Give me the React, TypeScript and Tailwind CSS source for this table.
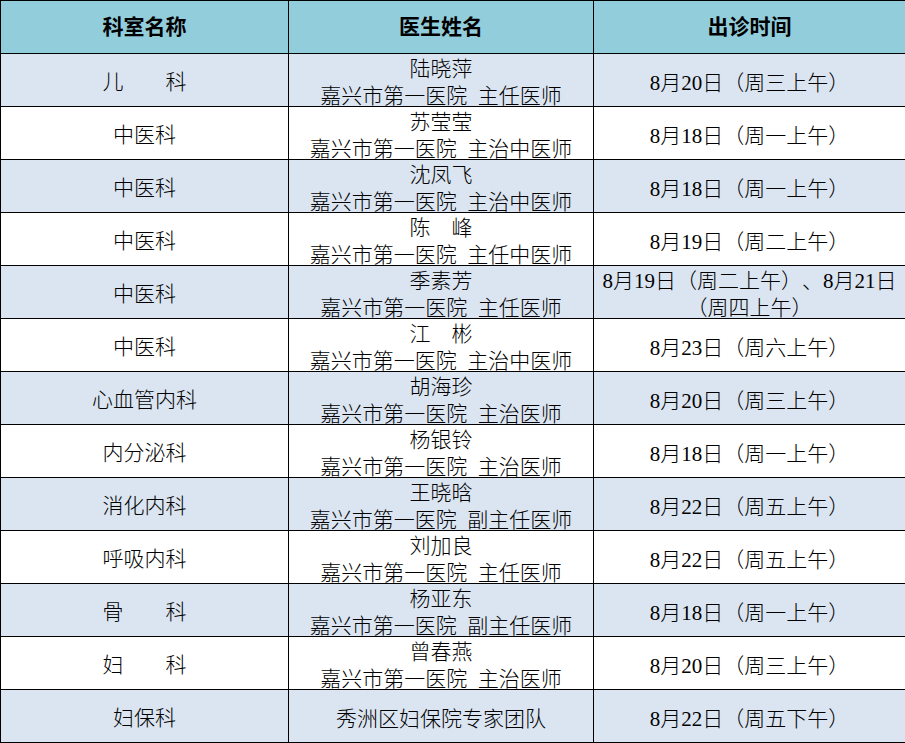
import React from 'react'

type Row = {
  dept: string
  doctor: string
  title?: string
  time: string[]
}

const rows: Row[] = [
  { dept: '儿　　科', doctor: '陆晓萍', title: '嘉兴市第一医院  主任医师', time: ['8月20日（周三上午）'] },
  { dept: '中医科', doctor: '苏莹莹', title: '嘉兴市第一医院  主治中医师', time: ['8月18日（周一上午）'] },
  { dept: '中医科', doctor: '沈凤飞', title: '嘉兴市第一医院  主治中医师', time: ['8月18日（周一上午）'] },
  { dept: '中医科', doctor: '陈　峰', title: '嘉兴市第一医院  主任中医师', time: ['8月19日（周二上午）'] },
  { dept: '中医科', doctor: '季素芳', title: '嘉兴市第一医院  主任医师', time: ['8月19日（周二上午）、8月21日', '（周四上午）'] },
  { dept: '中医科', doctor: '江　彬', title: '嘉兴市第一医院  主治中医师', time: ['8月23日（周六上午）'] },
  { dept: '心血管内科', doctor: '胡海珍', title: '嘉兴市第一医院  主治医师', time: ['8月20日（周三上午）'] },
  { dept: '内分泌科', doctor: '杨银铃', title: '嘉兴市第一医院  主治医师', time: ['8月18日（周一上午）'] },
  { dept: '消化内科', doctor: '王晓晗', title: '嘉兴市第一医院  副主任医师', time: ['8月22日（周五上午）'] },
  { dept: '呼吸内科', doctor: '刘加良', title: '嘉兴市第一医院  主任医师', time: ['8月22日（周五上午）'] },
  { dept: '骨　　科', doctor: '杨亚东', title: '嘉兴市第一医院  副主任医师', time: ['8月18日（周一上午）'] },
  { dept: '妇　　科', doctor: '曾春燕', title: '嘉兴市第一医院  主治医师', time: ['8月20日（周三上午）'] },
  { dept: '妇保科', doctor: '秀洲区妇保院专家团队', time: ['8月22日（周五下午）'] },
]

const font = { fontFamily: '"Liberation Serif", "Noto Sans CJK SC", serif' }

export default function App() {
  return (
    <div className="w-[905px] h-[743px] bg-white overflow-hidden" style={font}>
      <table className="w-[905px] table-fixed border-collapse text-[21px] text-black [text-spacing-trim:space-all]">
        <colgroup>
          <col className="w-[288px]" />
          <col className="w-[305px]" />
          <col className="w-[312px]" />
        </colgroup>
        <thead>
          <tr className="h-[53px] bg-[#92CDDC]">
            <th className="border border-black p-0 font-bold text-center">
              <div className="translate-y-[1px]">科室名称</div>
            </th>
            <th className="border border-black p-0 font-bold text-center">
              <div className="translate-y-[1px]">医生姓名</div>
            </th>
            <th className="border border-black p-0 font-bold text-center">
              <div className="translate-y-[1px]">出诊时间</div>
            </th>
          </tr>
        </thead>
        <tbody>
          {rows.map((row, i) => (
            <tr key={i} className={`h-[53px] ${i % 2 === 0 ? 'bg-[#DBE5F1]' : 'bg-white'}`}>
              <td className="border border-black p-0 text-center font-light">
                <div className="translate-y-[3px]">{row.dept}</div>
              </td>
              <td className="border border-black p-0 text-center font-light leading-[27px]">
                <div className="-my-[1px] translate-y-[3px]">
                  <div>{row.doctor}</div>
                  {row.title && <div className="whitespace-pre">{row.title}</div>}
                </div>
              </td>
              <td className="border border-black p-0 text-center font-light leading-[27px]">
                <div className="-my-[1px] translate-y-[3px]">
                  {row.time.map((t) => (
                    <div key={t} className="whitespace-nowrap">{t}</div>
                  ))}
                </div>
              </td>
            </tr>
          ))}
        </tbody>
      </table>
    </div>
  )
}
